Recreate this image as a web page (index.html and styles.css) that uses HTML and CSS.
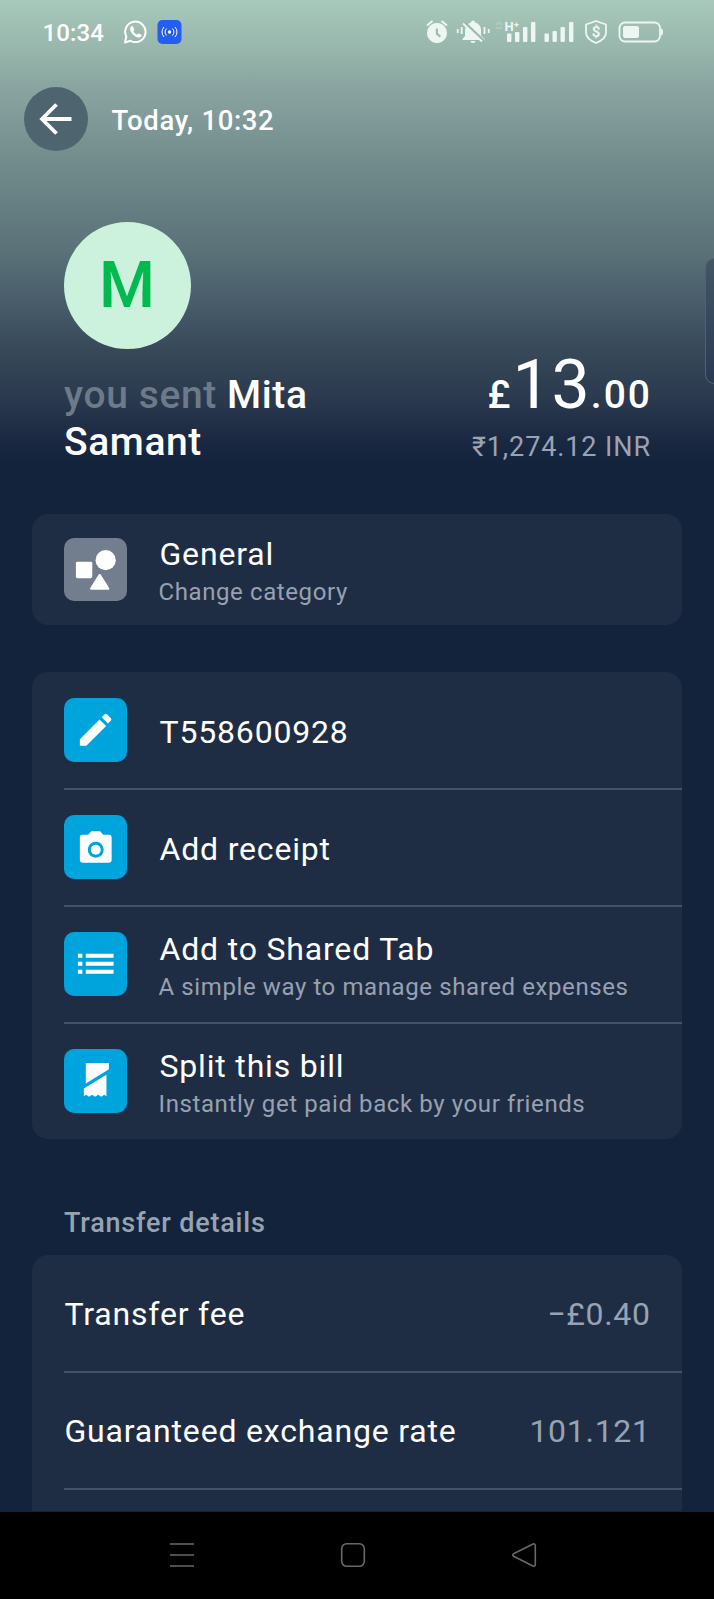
FILE: index.html
```html
<!DOCTYPE html>
<html lang="en">
<head>
<meta charset="utf-8">
<title>Transaction</title>
<link rel="stylesheet" href="styles.css">
</head>
<body>
<div class="screen">
  <div class="status">
    <span class="clock">10:34</span>
    <svg class="status-left" width="60" height="26" viewBox="0 0 60 26">
      <path d="M2 23.500L3.300 17.500A10.200 10.200 0 1 1 7.500 21.800Z" fill="none" stroke="#fff" stroke-width="2" stroke-linejoin="round"/>
      <path d="M7.600 8.200c.8-1.300 2-1.400 2.500-.5l1.200 2.500c.2.600-.9 1.500-.9 2 .6 1.500 2 2.800 3.500 3.400.6.100 1.300-1.300 1.900-1.100l2.500 1.200c.7.500.2 1.700-.6 2.300-1.700 1.200-4.700.3-7-1.800C8.300 14 6.400 10.700 7.600 8.200z" fill="#fff"/>
      <rect x="34.500" y="1" width="24" height="24" rx="5" fill="#245ef0"/>
      <circle cx="46.500" cy="13" r="1.700" fill="#fff"/>
      <path d="M43.500 9.500a5 5 0 0 0 0 7M49.500 9.500a5 5 0 0 1 0 7M41 8a8 8 0 0 0 0 10M52 8a8 8 0 0 1 0 10" fill="none" stroke="#fff" stroke-width="1"/>
    </svg>
    <svg class="status-right" width="240" height="28" viewBox="425 18 240 28">
      <g fill="#eef6f2">
        <path fill-rule="evenodd" d="M437 23a10 10 0 1 0 .01 0zM435.800 28.500h2.200v4.700l3 2.500-1.400 1.700-3.800-3.200z"/>
        <path d="M427 25.500l5.500-4.500M447 25.500l-5.500-4.500" stroke="#eef6f2" stroke-width="2"/>
        <path d="M473 20.500a2 2 0 0 1 2 2c4 1 6 4 6 8v5l3.500 3.500v1h-22v-1l2.500-3v-5c0-4 2-7.500 6-8.500a2 2 0 0 1 2-2zM470.500 41h5a2.500 2 0 0 1-5 0z"/>
        <path d="M464.500 22.500l19 18" stroke="#9bb9af" stroke-width="2.500"/>
        <path d="M463 23.500l19 18M457.700 29v4M461.700 27v7M484.500 27v7M488.700 29v4" stroke="#eef6f2" stroke-width="1.800"/>
        <rect x="507" y="33.500" width="4.400" height="8.500" rx="1"/><rect x="515" y="32" width="4.400" height="10" rx="1"/><rect x="523" y="27" width="4.400" height="15" rx="1"/><rect x="531" y="22" width="4.400" height="20" rx="1"/>
        <rect x="544.500" y="33.500" width="4.400" height="8.500" rx="1"/><rect x="552.500" y="31" width="4.400" height="11" rx="1"/><rect x="560.500" y="27" width="4.400" height="15" rx="1"/><rect x="569" y="22" width="4.400" height="20" rx="1"/>
        <rect x="623" y="26" width="16" height="12" rx="2"/>
        <path d="M661 28.500q2 0 2 3.500t-2 3.500z"/>
      </g>
      <g fill="none" stroke="#eef6f2" stroke-width="1.800">
        <path d="M496 25l3-3 3 3M496 28h6" stroke-opacity=".2"/>
        <path d="M596 21l10 3.500v8c0 5.500-5 8.500-10 10.500-5-2-10-5-10-10.500v-8z" stroke-linejoin="round"/>
        <rect x="619.500" y="22.500" width="40.500" height="19" rx="5.500"/>
      </g>
      <text class="net-label" x="504.500" y="31">H⁺</text>
      <text class="shield-label" x="596" y="37.300" text-anchor="middle">$</text>
    </svg>
  </div>

  <header class="topbar">
    <div class="back">
      <svg width="64" height="64" viewBox="0 0 64 64"><path d="M47.500 32H18M32.500 17.500L18 32l14.500 14.500" fill="none" stroke="#fff" stroke-width="3.800"/></svg>
    </div>
    <h1 class="title">Today, 10:32</h1>
  </header>

  <section class="hero">
    <div class="avatar">M</div>
    <div class="summary">
      <p class="who"><span class="muted-name">you sent</span> Mita Samant</p>
      <div class="amounts">
        <p class="amount"><span class="cur">£</span><span class="big">13</span><span class="dec">.00</span></p>
        <p class="converted">₹1,274.12 INR</p>
      </div>
    </div>
  </section>

  <section class="card category">
    <div class="row">
      <svg class="tile gray" viewBox="0 0 64 64"><rect x="12" y="24" width="16.500" height="16.500" rx="1.500"/><circle cx="42" cy="22.300" r="10.200"/><path d="M36 37.500L44.500 51h-17z" stroke="#fff" stroke-width="2.500" stroke-linejoin="round"/></svg>
      <div class="text"><p class="label">General</p><p class="sub">Change category</p></div>
    </div>
  </section>

  <section class="card actions">
    <div class="row">
      <svg class="tile" viewBox="0 0 64 64"><path d="M16 41.500L35.800 21.700l6.700 6.500L22.500 48H16zM38 19.500l3-3q1.200-1 2.300 0l4 4q1 1.200 0 2.300l-3 3z"/></svg>
      <p class="label">T558600928</p>
    </div>
    <div class="row">
      <svg class="tile" viewBox="0 0 64 64"><path fill-rule="evenodd" d="M18.500 20h6l3-3.500h9l3 3.500h6q2.500 0 2.500 2.500v23q0 2.500-2.500 2.500h-27q-2.500 0-2.500-2.500v-23q0-2.500 2.500-2.500zM32 27a8 8 0 1 0 .01 0z"/><circle cx="32" cy="35" r="5"/></svg>
      <p class="label">Add receipt</p>
    </div>
    <div class="row">
      <svg class="tile" viewBox="0 0 64 64"><path d="M14 22h4.500v4H14zm8 0h28v4H22zM14 30h4.500v4H14zm8 0h28v4H22zM14 38h4.500v4H14zm8 0h28v4H22z"/></svg>
      <div class="text"><p class="label">Add to Shared Tab</p><p class="sub">A simple way to manage shared expenses</p></div>
    </div>
    <div class="row">
      <svg class="tile" viewBox="0 0 64 64"><path d="M22 14h23.300v6.500L22 34.800zM42.800 26v21.500L40.600 46l-3.100 2-3-2-3.100 2-3.100-2-3.100 2-2.900-2-2.300 1.500v-7.700z"/></svg>
      <div class="text"><p class="label">Split this bill</p><p class="sub">Instantly get paid back by your friends</p></div>
    </div>
  </section>

  <h2 class="heading">Transfer details</h2>
  <section class="card details">
    <div class="row"><p class="label">Transfer fee</p><p class="value">−£0.40</p></div>
    <div class="row"><p class="label">Guaranteed exchange rate</p><p class="value">101.121</p></div>
    <div class="row"></div>
  </section>

  <nav class="nav">
    <svg width="26" height="26" viewBox="0 0 26 26"><path d="M1 2h24M1 13h24M1 24h24"/></svg>
    <svg width="26" height="26" viewBox="0 0 26 26"><rect x="1.700" y="1.700" width="22.600" height="22.600" rx="5"/></svg>
    <svg width="26" height="26" viewBox="0 0 26 26"><path d="M2.500 11.800L22 2q2.300-.7 2.300 1.800v18.400q0 2.500-2.300 1.800L2.500 14.200q-1.500-1.200 0-2.400z"/></svg>
  </nav>
  <div class="edge-handle"></div>
</div>
</body>
</html>
```
FILE: styles.css
```css
* { box-sizing: border-box; margin: 0; padding: 0; }
body { width: 714px; height: 1599px; overflow: hidden; font-family: Roboto, "Noto Sans", sans-serif; }

.screen {
  position: relative;
  display: flex;
  flex-direction: column;
  width: 714px;
  height: 1599px;
  overflow: hidden;
  color: #fff;
  background: linear-gradient(#a7c9bb 0, #98b6ac 50px, #8aa5a1 85px, #718b8c 165px, #667f83 205px, #5a7278 250px, #475b69 305px, #374959 350px, #2a394e 400px, #1a2842 440px, #13233c 468px);
}

.status { display: flex; align-items: center; height: 64px; padding-left: 42.500px; }
.clock { width: 80.500px; padding-top: 1px; font-size: 24px; font-weight: 500; letter-spacing: .1px; }
.status-right { margin-left: auto; margin-right: 49px; }
.net-label { font-size: 13px; font-weight: 700; fill: #eef6f2; }
.shield-label { font-size: 15px; font-weight: 700; fill: #eef6f2; }

.topbar { display: flex; align-items: center; gap: 24px; height: 64px; margin-top: 23px; padding-left: 23.500px; }
.back { width: 64px; height: 64px; border-radius: 50%; background: #4e6570; }
.title { padding-top: 3px; font-size: 27.500px; font-weight: 500; letter-spacing: .65px; line-height: 32px; }

.hero { margin-top: 71px; padding: 0 64px; }
.avatar { width: 127px; height: 127px; margin-left: -.5px; border-radius: 50%; background: #ccf1dc; color: #00ba50; font-size: 64px; font-weight: 500; line-height: 127px; text-align: center; }
.summary { display: flex; justify-content: space-between; margin-top: 21px; height: 96px; }
.who { width: 270px; margin-top: 1.500px; font-size: 39px; font-weight: 500; line-height: 47.500px; letter-spacing: .6px; }
.muted-name { color: #6d7a8a; }
.amounts { display: flex; flex-direction: column; align-items: flex-end; margin-top: -25px; }
.amount { display: flex; align-items: baseline; height: 78px; line-height: 80px; font-size: 39px; font-weight: 500; letter-spacing: 2px; margin-right: -2px; }
.big { font-size: 68px; font-weight: 400; letter-spacing: 1px; }
.converted { color: #9ba3b3; font-size: 27px; line-height: 32px; margin-top: 8px; margin-right: -1px; letter-spacing: .9px; white-space: nowrap; }

.card { margin: 0 32px; border-radius: 16px; background: #1f2d44; }
.category { margin-top: 48px; height: 111px; }
.actions { margin-top: 47px; height: 467px; }
.row { position: relative; display: flex; align-items: center; gap: 32px; height: 117px; padding: 0 32px; }
.category .row { height: 111px; }
.row + .row::before { content: ""; position: absolute; left: 32px; right: 0; top: -1px; height: 2px; background: #45536a; }
.tile { flex: none; width: 63.500px; height: 63.500px; margin: 0 0 0 -.5px; border-radius: 10px; background: #00a4dc; fill: #fff; }
.actions .tile { margin-top: -1px; }
.gray { background: #727d8e; }
.text { padding-top: 4px; }
.label { padding: 1px 0 0 .5px; font-size: 32px; line-height: 38px; letter-spacing: .82px; white-space: nowrap; }
.actions .row > .label { padding-top: 2px; }
.sub { margin: 1.500px 0 0 -.5px; color: #97a1b1; font-size: 24px; line-height: 34px; letter-spacing: .6px; white-space: nowrap; }
.heading { margin: 68px 64px 0; color: #98a3b2; font-size: 27px; font-weight: 500; line-height: 32px; letter-spacing: .8px; }
.details { margin-top: 16px; height: 256px; border-radius: 16px 16px 0 0; overflow: hidden; }
.details .row { justify-content: space-between; }
.value { padding-top: 1px; color: #98a3b2; font-size: 32px; letter-spacing: .7px; margin-right: -.7px; }

.nav { position: absolute; left: 0; right: 0; bottom: 0; display: flex; gap: 145px; height: 87px; padding: 30px 0 0 169px; background: #000; }
.nav svg { fill: none; stroke: #686868; stroke-width: 1.600; }
.edge-handle { position: absolute; top: 258px; right: -10px; width: 19px; height: 126px; border: 1.500px solid #50626f; border-radius: 10px; background: linear-gradient(#425666, #293954); }
```
